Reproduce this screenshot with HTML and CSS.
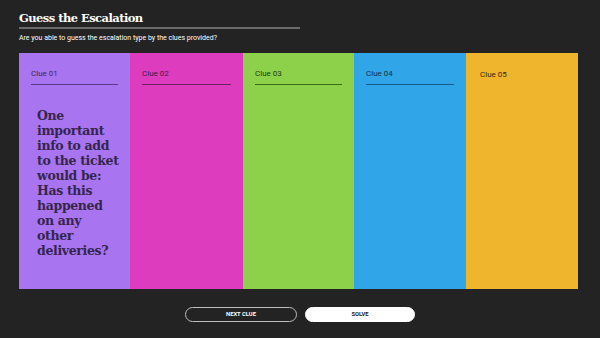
FILE: index.html
```html
<!DOCTYPE html>
<html>
<head>
<meta charset="utf-8">
<link rel="stylesheet" href="styles.css">
</head>
<body>
<div class="page">
  <header class="head">
    <h1 class="title">Guess the Escalation</h1>
    <div class="rule"></div>
    <p class="sub">Are you able to guess the escalation type by the clues provided?</p>
  </header>
  <section class="board">
    <div class="clue c1">
      <div class="label">Clue 01</div>
      <p class="text">One important info to add to&nbsp;the&nbsp;ticket would be: Has this happened on any other deliveries?</p>
    </div>
    <div class="clue c2"><div class="label">Clue 02</div></div>
    <div class="clue c3"><div class="label">Clue 03</div></div>
    <div class="clue c4"><div class="label">Clue 04</div></div>
    <div class="clue c5"><div class="label plain">Clue 05</div></div>
  </section>
  <div class="actions">
    <button class="btn ghost">NEXT CLUE</button>
    <button class="btn solid">SOLVE</button>
  </div>
</div>
</body>
</html>
```
FILE: styles.css
```css
* { box-sizing: border-box; }
html, body { margin: 0; padding: 0; }
body { background: #232323; width: 600px; height: 338px; overflow: hidden; font-family: Roboto, "Liberation Sans", sans-serif; }
.page { padding: 9px 22px 0 19px; }
.head { width: 281px; }
.title { margin: 0; font-family: "DejaVu Serif", serif; font-weight: bold; font-size: 11.5px; letter-spacing: -0.55px; color: #fff; line-height: 18px; }
.rule { height: 2px; background: #6b6b6b; }
.sub { margin: 5px 0 0; font-size: 7px; color: #fff; line-height: 9px; white-space: nowrap; }
.board { display: grid; grid-template-columns: 111px 113px 111px 112px 112px; height: 236px; margin-top: 10px; }
.clue { padding: 16px 12px 0 12px; }
.c1 { background: #a874f0; }
.c2 { background: #dc3cbd; }
.c3 { background: #8dd14b; }
.c4 { background: #30a5e8; }
.c5 { background: #eeb52d; }
.label { font-size: 8px; color: #2a2a2a; line-height: 10px; padding-bottom: 5px; border-bottom: 1px solid #3d3d3d; }
.c1 .label { color: #3b2a55; border-color: #5a3a8a; }
.c2 .label { color: #4a1a40; border-color: #6d1f60; }
.c3 .label { color: #243a12; border-color: #3a6a1a; }
.c4 .label { color: #12344a; border-color: #135a85; }
.label.plain { border-bottom: none; padding: 1px 0 0 2px; color: #3a2c0c; }
.text { margin: 23px 0 0 6px; width: 74px; font-family: "DejaVu Serif", serif; font-weight: bold; font-size: 12.5px; letter-spacing: -0.35px; line-height: 15px; color: #35254d; }
.actions { display: flex; justify-content: center; gap: 8px; margin-top: 18px; padding-left: 3px; }
.btn { width: 112px; height: 15px; border-radius: 8px; font-family: Roboto, "Liberation Sans", sans-serif; font-weight: bold; font-size: 5.8px; padding: 0; line-height: 13px; }
.ghost { background: transparent; border: 1px solid #bdbdbd; color: #fff; }
.solid { background: #fff; border: 1px solid #fff; color: #222; width: 110px; }
```
